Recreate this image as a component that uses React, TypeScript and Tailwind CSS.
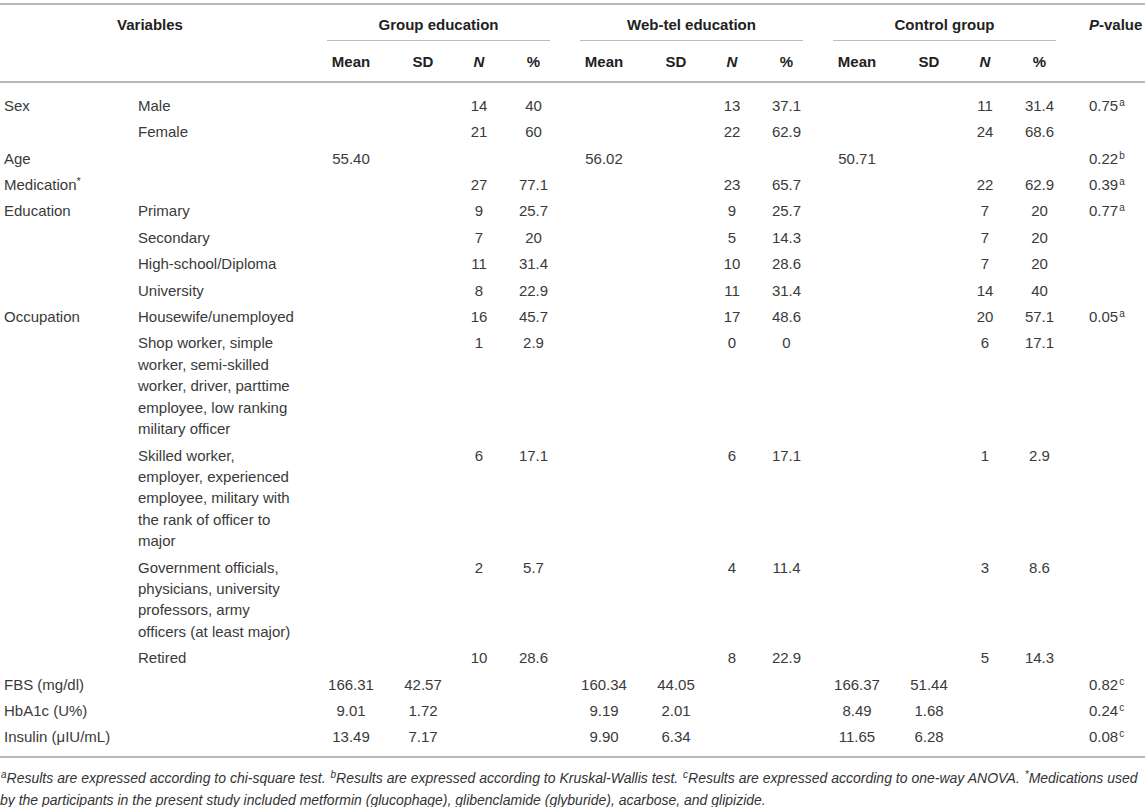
import { FC, ReactNode } from "react";

const GRID =
  "grid grid-cols-[134px_185px_64px_80px_32px_77px_64px_80px_32px_77px_64px_80px_32px_77px_67px]";

type Group = [string?, string?, string?, string?];

interface RowData {
  a?: ReactNode;
  b?: ReactNode;
  g: [Group, Group, Group];
  p?: ReactNode;
}

const Sup: FC<{ children: ReactNode }> = ({ children }) => (
  <sup className="text-[10px] ml-[1px]">{children}</sup>
);

const rows: RowData[] = [
  { a: "Sex", b: "Male", g: [[, , "14", "40"], [, , "13", "37.1"], [, , "11", "31.4"]], p: <>0.75<Sup>a</Sup></> },
  { b: "Female", g: [[, , "21", "60"], [, , "22", "62.9"], [, , "24", "68.6"]] },
  { a: "Age", g: [["55.40"], ["56.02"], ["50.71"]], p: <>0.22<Sup>b</Sup></> },
  { a: <>Medication<sup className="text-[11px]">*</sup></>, g: [[, , "27", "77.1"], [, , "23", "65.7"], [, , "22", "62.9"]], p: <>0.39<Sup>a</Sup></> },
  { a: "Education", b: "Primary", g: [[, , "9", "25.7"], [, , "9", "25.7"], [, , "7", "20"]], p: <>0.77<Sup>a</Sup></> },
  { b: "Secondary", g: [[, , "7", "20"], [, , "5", "14.3"], [, , "7", "20"]] },
  { b: "High-school/Diploma", g: [[, , "11", "31.4"], [, , "10", "28.6"], [, , "7", "20"]] },
  { b: "University", g: [[, , "8", "22.9"], [, , "11", "31.4"], [, , "14", "40"]] },
  { a: "Occupation", b: "Housewife/unemployed", g: [[, , "16", "45.7"], [, , "17", "48.6"], [, , "20", "57.1"]], p: <>0.05<Sup>a</Sup></> },
  {
    b: "Shop worker, simple worker, semi-skilled worker, driver, parttime employee, low ranking military officer",
    g: [[, , "1", "2.9"], [, , "0", "0"], [, , "6", "17.1"]],
  },
  {
    b: "Skilled worker, employer, experienced employee, military with the rank of officer to major",
    g: [[, , "6", "17.1"], [, , "6", "17.1"], [, , "1", "2.9"]],
  },
  {
    b: "Government officials, physicians, university professors, army officers (at least major)",
    g: [[, , "2", "5.7"], [, , "4", "11.4"], [, , "3", "8.6"]],
  },
  { b: "Retired", g: [[, , "10", "28.6"], [, , "8", "22.9"], [, , "5", "14.3"]] },
  { a: "FBS (mg/dl)", g: [["166.31", "42.57"], ["160.34", "44.05"], ["166.37", "51.44"]], p: <>0.82<Sup>c</Sup></> },
  { a: "HbA1c (U%)", g: [["9.01", "1.72"], ["9.19", "2.01"], ["8.49", "1.68"]], p: <>0.24<Sup>c</Sup></> },
  { a: "Insulin (μIU/mL)", g: [["13.49", "7.17"], ["9.90", "6.34"], ["11.65", "6.28"]], p: <>0.08<Sup>c</Sup></> },
];

const GroupHead: FC<{ title: string }> = ({ title }) => (
  <div className="col-span-4 pl-[8px] pr-[22px] flex flex-col">
    <div className="pt-[8.5px] pb-[5.5px] text-center font-bold text-[#222]">{title}</div>
    <div className="h-px bg-[#bdbdbd]" />
  </div>
);

const SubHeads = () => (
  <>
    <div className="text-center font-bold text-[#222]">Mean</div>
    <div className="text-center font-bold text-[#222]">SD</div>
    <div className="text-center font-bold italic text-[#222]">N</div>
    <div className="text-center font-bold text-[#222]">%</div>
  </>
);

export default function App() {
  return (
    <div
      className="w-[1145px] h-[807px] overflow-hidden bg-white text-[15px] leading-[21.4px] text-[#3a3a3a] pt-[3px]"
      style={{ fontFamily: '"Liberation Sans", Arial, sans-serif' }}
    >
      <div className="h-[2px] bg-[#b9b9b9]" />

      {/* header row 1 */}
      <div className={GRID}>
        <div className="col-span-2 pt-[8.5px] pr-[19px] text-center font-bold text-[#222]">Variables</div>
        <GroupHead title="Group education" />
        <GroupHead title="Web-tel education" />
        <GroupHead title="Control group" />
        <div className="pt-[8.5px] pl-[11px] font-bold text-[#222] whitespace-nowrap">
          <span className="italic">P</span>-value
        </div>
      </div>

      {/* header row 2 */}
      <div className={`${GRID} pt-[9.5px] pb-[9px]`}>
        <div />
        <div />
        <SubHeads />
        <SubHeads />
        <SubHeads />
        <div />
      </div>
      <div className="h-[2px] bg-[#b9b9b9]" />

      {/* body */}
      <div className="pt-[9px] pb-[6px]">
        {rows.map((r, i) => (
          <div key={i} className={`${GRID} py-[2.5px]`}>
            <div className="pl-[4px]">{r.a}</div>
            <div className="pl-[4px] pr-[21px]">{r.b}</div>
            {r.g.map((grp, gi) =>
              [0, 1, 2, 3].map((ci) => (
                <div key={`${gi}-${ci}`} className="text-center">
                  {grp[ci]}
                </div>
              ))
            )}
            <div className="pl-[11px] whitespace-nowrap">{r.p}</div>
          </div>
        ))}
      </div>
      <div className="h-[2px] bg-[#b9b9b9]" />

      {/* footnote */}
      <p className="pt-[9px] italic text-[14px] leading-[22px] text-[#333]">
        <Sup>a</Sup>Results are expressed according to chi-square test. <Sup>b</Sup>Results are expressed
        according to Kruskal-Wallis test. <Sup>c</Sup>Results are expressed according to one-way ANOVA.{" "}
        <Sup>*</Sup>Medications used by the participants in the present study included metformin
        (glucophage), glibenclamide (glyburide), acarbose, and glipizide.
      </p>
    </div>
  );
}
